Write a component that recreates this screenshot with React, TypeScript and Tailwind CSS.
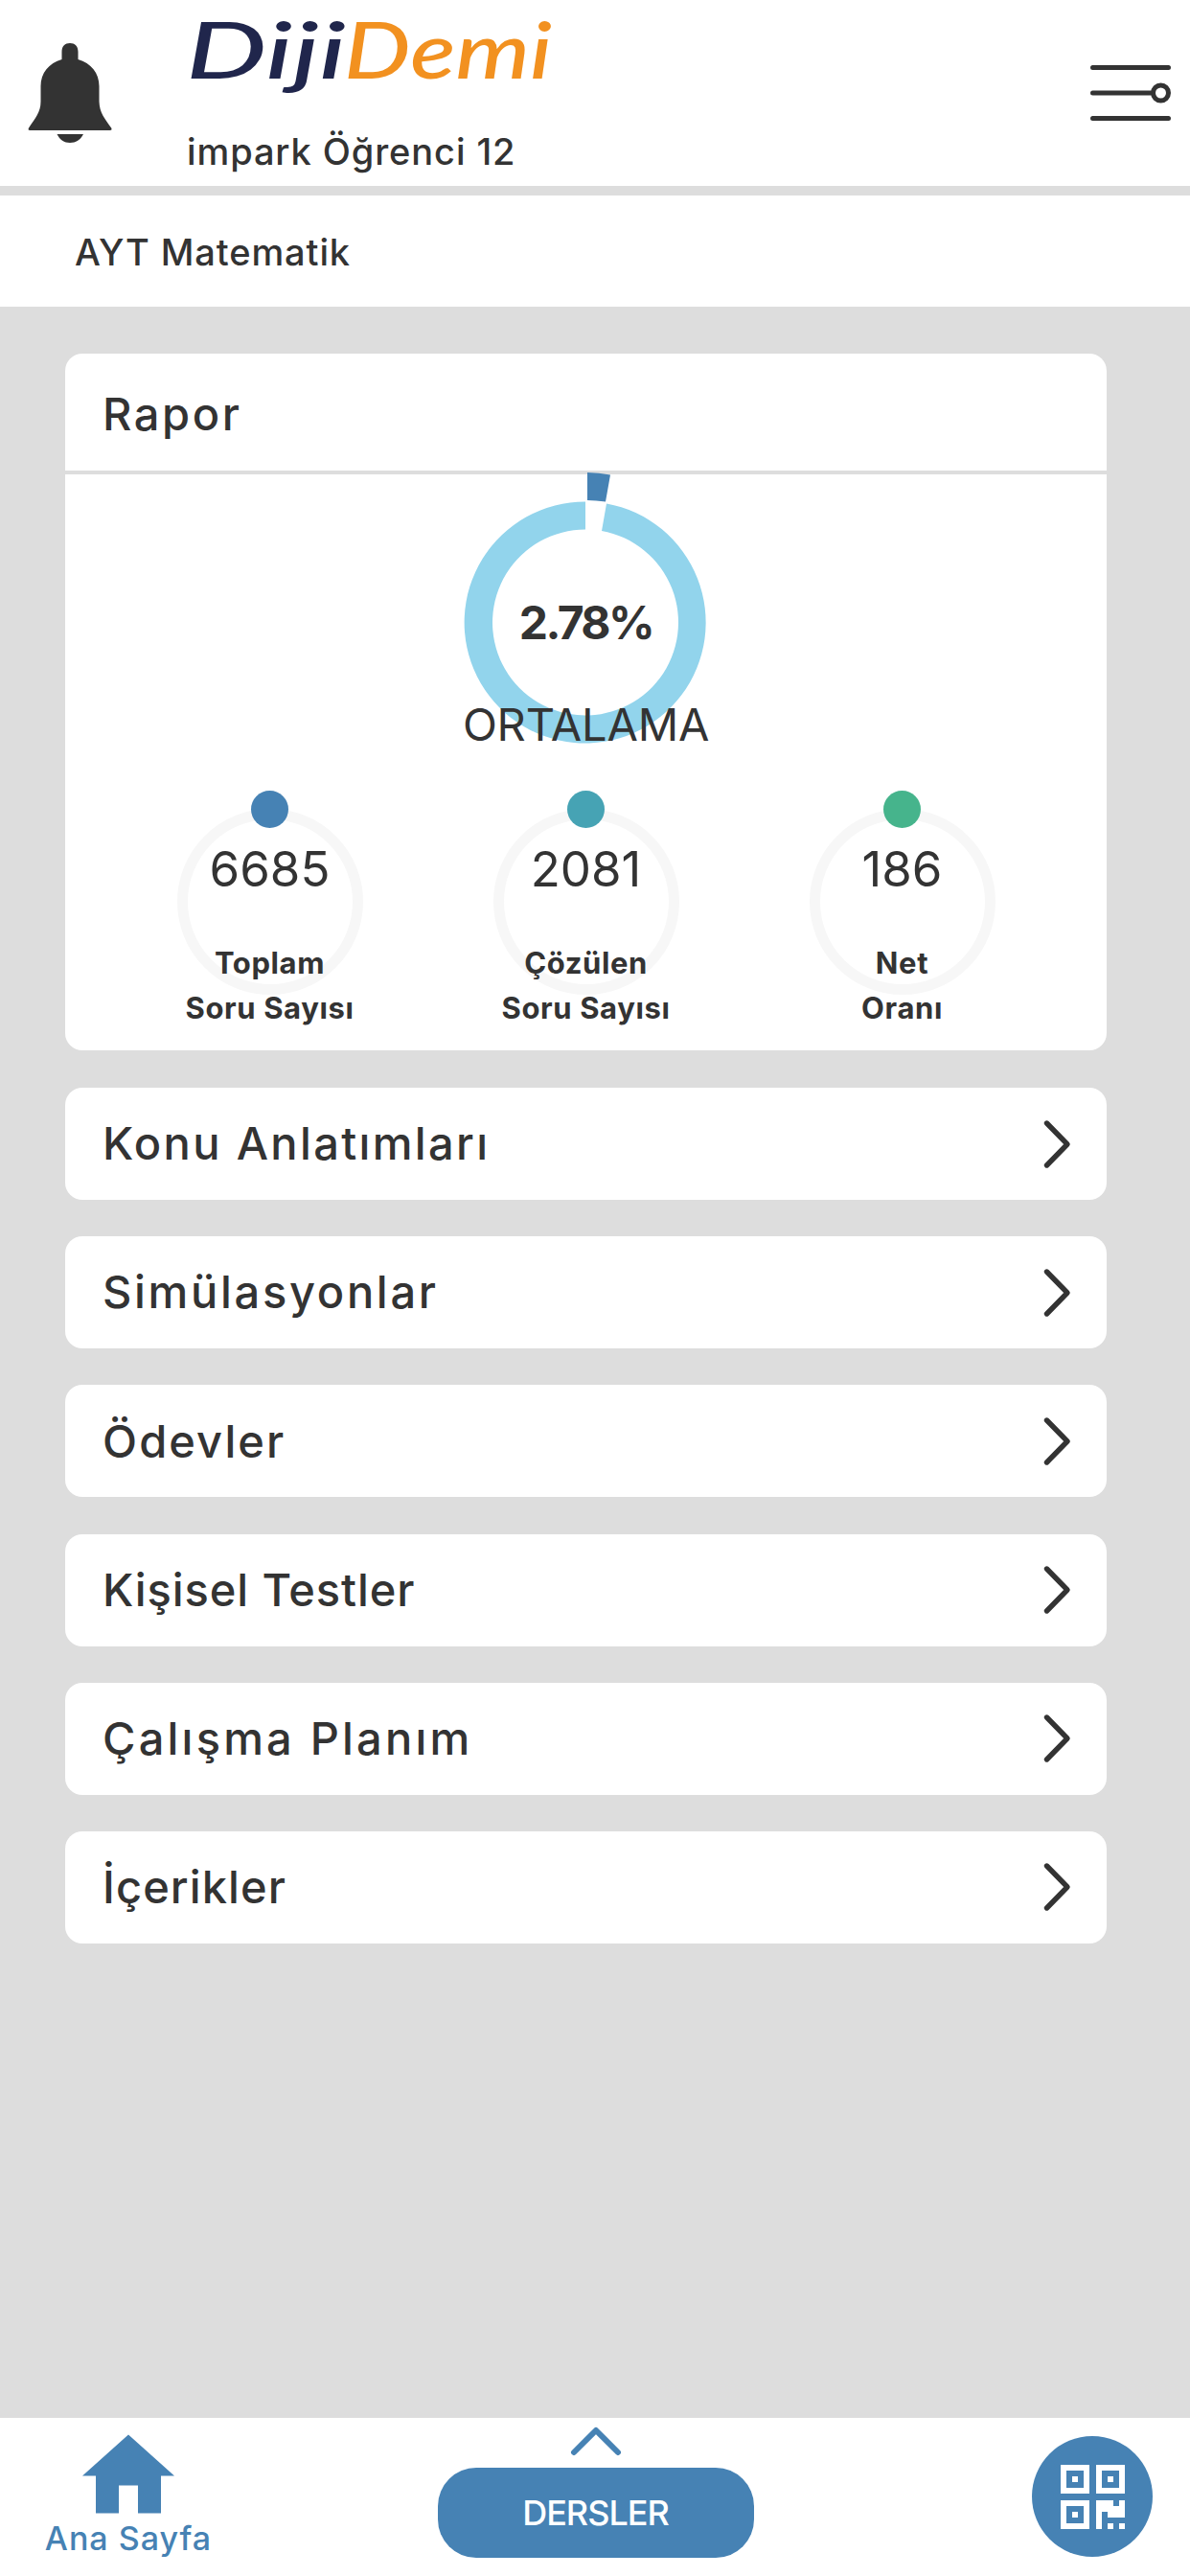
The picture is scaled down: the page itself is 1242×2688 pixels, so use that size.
import { useState } from 'react';

const STATS = [
  { value: '6685', lines: ['Toplam', 'Soru Sayısı'], dot: 'bg-[#4682b4]' },
  { value: '2081', lines: ['Çözülen', 'Soru Sayısı'], dot: 'bg-[#46a3b4]' },
  { value: '186', lines: ['Net', 'Oranı'], dot: 'bg-[#46b48c]' },
];

const SECTIONS = [
  { title: 'Konu Anlatımları', tracking: 'tracking-[2.35px]' },
  { title: 'Simülasyonlar', tracking: 'tracking-[2.7px]' },
  { title: 'Ödevler', tracking: 'tracking-[2.1px]' },
  { title: 'Kişisel Testler', tracking: 'tracking-[0.9px]' },
  { title: 'Çalışma Planım', tracking: 'tracking-[3.2px]' },
  { title: 'İçerikler', tracking: 'tracking-[1.1px]' },
];

export default function App() {
  const [active, setActive] = useState<string | null>(null);

  return (
    <div className="flex flex-col w-[1242px] h-[2688px] bg-[#dddddd] text-[#333333] font-[Inter,'Noto_Sans',sans-serif] font-medium overflow-hidden">
      <Header />

      <div className="h-[116px] mt-[10px] pl-[78px] pt-[3px] bg-white flex items-center shrink-0">
        <h1 className="text-[38px] tracking-[0.9px] whitespace-nowrap">AYT Matematik</h1>
      </div>

      <main className="flex-1 pl-[68px] pr-[87px] pt-[49px]">
        <Report />
        <div className="mt-[39px] flex flex-col gap-[38.2px]">
          {SECTIONS.map(({ title, tracking }) => (
            <button
              key={title}
              onClick={() => setActive(title)}
              aria-pressed={active === title}
              className="h-[117px] rounded-[18px] bg-white pl-[39px] pr-[35px] flex items-center justify-between text-left"
            >
              <span className={`text-[47px] whitespace-nowrap ${tracking}`}>{title}</span>
              <svg width="33" height="54" viewBox="0 0 33 54" fill="none" className="shrink-0">
                <path
                  d="M5.5 5 L27 27 L5.5 49"
                  stroke="#333333"
                  strokeWidth="5.4"
                  strokeLinecap="round"
                  strokeLinejoin="round"
                />
              </svg>
            </button>
          ))}
        </div>
      </main>

      <BottomBar />
    </div>
  );
}

// ─── Header ───────────────────────────────────────────────────────────────────
function Header() {
  return (
    <header className="h-[194px] bg-white flex shrink-0">
      <svg width="88" height="106" viewBox="0 0 88 106" className="ml-[29px] mt-[44px] shrink-0" fill="#333333">
        <path d="M35.500 18 V10 C35.500 4 39 1 44 1 C49 1 52.500 4 52.500 10 V18 C66 22 74.500 32 74.500 46 V62 C75 74 80 79 87.500 90 Q88 92 86 92 H2 Q0 92 .7 90 C8 79 13.500 73 13.500 62 V46 C13.500 32 22 22 35.500 18 Z" />
        <path d="M30.500 96 H58 C55 102 50 105 44 105 C38 105 33.500 102 30.500 96 Z" />
      </svg>

      <div className="ml-[77px] flex flex-col">
        <svg width="390" height="130" viewBox="0 0 390 130" className="font-[Lato,sans-serif] italic font-medium overflow-visible">
          <text x="0" y="82" fontSize="82" fill="#20264c" textLength="167" lengthAdjust="spacingAndGlyphs">
            Diji
          </text>
          <text x="165" y="82" fontSize="82" fill="#f29120" textLength="217" lengthAdjust="spacingAndGlyphs">
            Demi
          </text>
        </svg>
        <p className="h-[56px] leading-[56px] ml-px text-[38px] tracking-[0.9px] whitespace-nowrap">
          impark Öğrenci 12
        </p>
      </div>

      <button aria-label="Menü" className="ml-auto mr-[17px] mt-[65px] h-[64px]">
        <svg width="88" height="64" viewBox="0 0 88 64" fill="none" stroke="#333333" strokeWidth="5" strokeLinecap="round">
          <path d="M3.500 5.500 H82.500 M3.500 32 H66 M3.500 58.500 H82.500" />
          <circle cx="74.500" cy="32" r="8" />
        </svg>
      </button>
    </header>
  );
}

// ─── Report card ──────────────────────────────────────────────────────────────
function Report() {
  return (
    <section className="h-[727px] rounded-[18px] bg-white">
      <div className="h-[126px] border-b-4 border-[#dddddd] pl-[39px] pt-[4px] flex items-center">
        <h2 className="text-[47px] tracking-[2.6px]">Rapor</h2>
      </div>

      <div className="relative h-[330px]">
        {/* Ring with the achieved slice pulled out over the divider */}
        <svg width="260" height="286" viewBox="0 0 260 286" className="absolute left-[413px] -top-[4px]">
          <path
            d="M130 32.500 A126 126 0 1 0 152 34.500 L147 63 A97 97 0 1 1 130 61.500 Z"
            fill="#92d4ec"
          />
          <path d="M132 2 Q144 2 156 4.500 L151 32.500 Q141 31 132 31 Z" fill="#4682b4" />
        </svg>
        <p className="absolute left-0 right-0 top-[125px] text-center text-[48px] leading-[60px] font-bold tracking-[-2.6px]">
          2.78%
        </p>
        <p className="absolute left-0 right-0 top-[231px] text-center text-[47px] leading-[60px] font-normal tracking-[-0.2px]">
          ORTALAMA
        </p>
      </div>

      <div className="grid grid-cols-[330px_330px_330px] justify-center">
        {STATS.map((stat) => (
          <div key={stat.value} className="relative flex flex-col items-center">
            <div className="absolute left-[68px] top-[19px] w-[194px] h-[194px] rounded-full border-[11px] border-[#f7f7f7]" />
            <div className={`relative w-[39px] h-[39px] rounded-full ${stat.dot}`} />
            <p className="relative mt-[13px] text-[51px] leading-[60px] font-normal">{stat.value}</p>
            <p className="relative mt-[44px] text-center text-[31px] leading-[47px] font-bold tracking-[0.6px] whitespace-nowrap">
              {stat.lines[0]}
              <br />
              {stat.lines[1]}
            </p>
          </div>
        ))}
      </div>
    </section>
  );
}

// ─── Bottom bar ───────────────────────────────────────────────────────────────
function BottomBar() {
  return (
    <nav className="h-[165px] bg-white flex justify-between shrink-0 pl-[34px] pr-[39px]">
      <a className="w-[200px] flex flex-col items-center text-[#4682b4]">
        <svg width="96" height="84" viewBox="0 0 96 84" className="mt-[17px]" fill="currentColor">
          <path d="M48 .5 L96 43.500 H82 V82.500 H58 V53.500 H38 V82.500 H14 V43.500 H0 Z" />
        </svg>
        <span className="mt-[5px] text-[34px] leading-[40px] tracking-[1px] whitespace-nowrap">Ana Sayfa</span>
      </a>

      <div className="ml-[61px] flex flex-col items-center">
        <svg width="54" height="34" viewBox="0 0 54 34" className="mt-[8px]" fill="none">
          <path
            d="M4 28 L27 5 L50 28"
            stroke="#4682b4"
            strokeWidth="6"
            strokeLinecap="round"
            strokeLinejoin="round"
          />
        </svg>
        <button className="mt-[10px] w-[330px] h-[94px] rounded-[40px] bg-[#4682b4] text-white text-[36px] tracking-[-1px]">
          DERSLER
        </button>
      </div>

      <button aria-label="QR" className="ml-[129px] mt-[19px] w-[126px] h-[126px] rounded-full bg-[#4682b4] flex items-center justify-center">
        <svg width="67" height="67" viewBox="0 0 11 11" fill="white" fillRule="evenodd" shapeRendering="crispEdges">
          <path d="M0 0h5v5h-5z M1 1v3h3v-3z M2 2h1v1h-1z" />
          <path d="M6 0h5v5h-5z M7 1v3h3v-3z M8 2h1v1h-1z" />
          <path d="M0 6h5v5h-5z M1 7v3h3v-3z M2 8h1v1h-1z" />
          <path d="M6 6h3v1h1v-1h1v3h-3v-1h-1v3h-1z M8 10h1v1h-1z M10 10h1v1h-1z" />
        </svg>
      </button>
    </nav>
  );
}
